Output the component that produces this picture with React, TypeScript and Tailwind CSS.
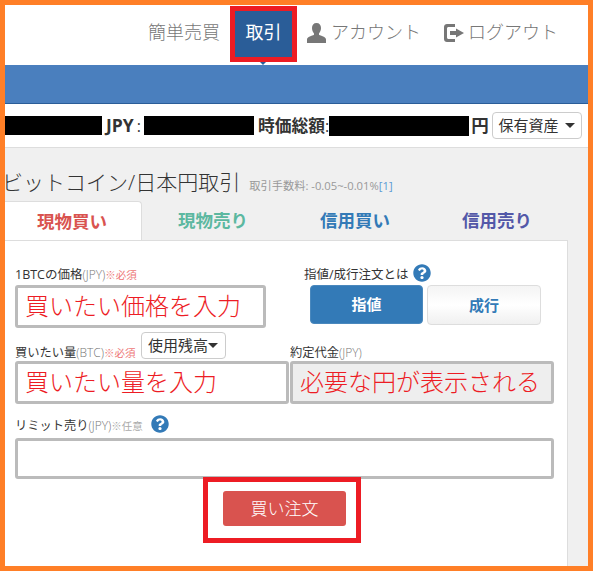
import { FaQuestionCircle } from "react-icons/fa";

const font = { fontFamily: '"Open Sans","Noto Sans CJK JP",sans-serif' };

function UserIcon() {
  return (
    <svg width="19" height="20" viewBox="0 0 19 20" className="text-[#777]" fill="currentColor">
      <path d="M9.5 0C6.6 0 5 2 5 5c0 2.2.8 4.2 2 5.4v1.4c-1.8 1-7 2-7 4.700V20h19v-3.500c0-2.700-5.200-3.700-7-4.700v-1.400c1.200-1.200 2-3.200 2-5.400 0-3-1.600-5-4.500-5z" />
    </svg>
  );
}

function LogoutIcon() {
  return (
    <svg width="20" height="18" viewBox="0 0 20 18" className="text-[#777]" fill="currentColor">
      <path d="M3 0h8v3H4.500C3.700 3 3 3.700 3 4.500v9c0 .8.7 1.500 1.500 1.500H11v3H3c-1.700 0-3-1.300-3-3V3c0-1.700 1.300-3 3-3z" />
      <path d="M12 4.500 20 9l-8 4.500V11H6V7h6z" />
    </svg>
  );
}

function Help() {
  return <FaQuestionCircle className="text-[#337ab7] text-[18px] shrink-0 mt-[-5px]" />;
}

function Field({ w, text, gray, h = "h-[43px]" }: { w: string; text?: string; gray?: boolean; h?: string }) {
  return (
    <div
      className={`${w} ${h} border-[3px] border-[#bbbbbb] rounded-[3px] flex items-center pl-[7px] pb-[2px] text-[24px] font-light text-[#ed1c24] whitespace-nowrap ${
        gray ? "bg-[#eeeeee]" : "bg-white"
      }`}
    >
      {text}
    </div>
  );
}

export default function App() {
  return (
    <div
      style={font}
      className="w-[593px] h-[571px] box-border border-[5px] border-[#ff7f27] overflow-hidden bg-[#f0f0f0] flex flex-col"
    >
      <header className="h-[60px] shrink-0 bg-white flex items-center justify-end pr-[30px] pb-[5px] text-[18px] font-light text-[#777]">
        <span>簡単売買</span>
        <div className="relative ml-[10px] mr-[10px] mt-[3px] w-[67px] h-[56px] border-[5px] border-[#ed1c24] bg-[#2a5d98] text-white font-normal flex items-center justify-center pb-[4px]">
          取引
          <span className="absolute left-[25px] top-[51px] border-x-[3px] border-t-[3px] border-x-transparent border-t-[#2a5d98]" />
        </div>
        <UserIcon />
        <span className="ml-[5px] mr-[23px]">アカウント</span>
        <LogoutIcon />
        <span className="ml-[4px]">ログアウト</span>
      </header>

      <div className="h-[39px] shrink-0 bg-[#4a7fbe] border-b border-[#2a5d98]" />

      <div className="h-[44px] shrink-0 bg-white border-b border-[#dddddd] flex items-center text-[17.500px] font-bold text-[#333] whitespace-nowrap">
        <span className="w-[97px] h-[19px] bg-black" />
        <span className="ml-[4px]">JPY</span>
        <span className="ml-[3px] font-normal text-[16px]">:</span>
        <span className="ml-[3px] w-[110px] h-[19px] bg-black" />
        <span className="ml-[4px] text-[16.750px]">時価総額</span>
        <span className="font-normal text-[16px]">:</span>
        <span className="w-[140px] h-[20px] bg-black" />
        <span className="ml-[2px]">円</span>
        <button className="ml-[3px] w-[90px] h-[27px] border border-[#cccccc] rounded bg-white text-[15px] font-normal flex items-center justify-center gap-[6px]">
          保有資産
          <span className="border-x-[5px] border-t-[5px] border-x-transparent border-t-[#333]" />
        </button>
      </div>

      <div className="flex items-baseline mt-[19px] ml-[-3px] whitespace-nowrap">
        <h1 className="text-[21px] leading-[30px] font-light text-[#333]">ビットコイン/日本円取引</h1>
        <span className="ml-[9px] text-[11.250px] text-[#999]">
          取引手数料: -0.05~-0.01%<span className="text-[#5b9bd5]">[1]</span>
        </span>
      </div>

      <div className="flex mt-[4px] ml-[-3px] h-[39px] text-[17.500px] font-bold">
        <div className="w-[140px] bg-white border border-b-0 border-[#dddddd] rounded-t flex items-center justify-center text-[#d9534f]">
          現物買い
        </div>
        <div className="w-[142px] flex items-center justify-center text-[#5cb8a0]">現物売り</div>
        <div className="w-[142px] flex items-center justify-center text-[#337ab7]">信用買い</div>
        <div className="w-[142px] flex items-center justify-center text-[#5358a8]">信用売り</div>
      </div>

      <main className="w-[563px] grow bg-white border-t border-r border-[#dddddd] pl-[10px] text-[#333]">
        <div className="flex mt-[24px]">
          <div className="w-[289px]">
            <p className="h-[20px] text-[12.500px] leading-[20px]">
              1BTCの価格<span className="text-[12px] font-light text-[#777]">(JPY)</span>
              <span className="text-[10.500px] text-[#e77]">※必須</span>
            </p>
            <Field w="w-[251px]" text="買いたい価格を入力" />
          </div>
          <div className="flex-1">
            <p className="h-[20px] text-[12.500px] leading-[20px] flex items-center gap-[4px]">
              指値/成行注文とは
              <Help />
            </p>
            <div className="flex ml-[6px] gap-[4px] font-bold text-[15px]">
              <div className="w-[113px] h-[39px] rounded border border-[#4a88bd] bg-[#337ab7] text-white flex items-center justify-center">
                指値
              </div>
              <div className="w-[114px] h-[40px] rounded border border-[#dddddd] bg-gradient-to-b from-[#f4f4f4] via-white to-[#f0f0f0] text-[#337ab7] flex items-center justify-center">
                成行
              </div>
            </div>
          </div>
        </div>

        <div className="flex mt-[4px]">
          <div className="w-[275px]">
            <div className="flex items-end h-[29px]">
              <p className="text-[12.250px] leading-[16px]">
                買いたい量<span className="text-[12px] font-light text-[#777]">(BTC)</span>
                <span className="text-[10.500px] text-[#e77]">※必須</span>
              </p>
              <button className="ml-[5px] mb-[2px] w-[85px] h-[27px] border border-[#cccccc] rounded bg-white text-[15px] flex items-center justify-center">
                使用残高
                <span className="border-x-[5px] border-t-[5px] border-x-transparent border-t-[#333]" />
              </button>
            </div>
            <Field w="w-[274px]" text="買いたい量を入力" />
          </div>
          <div>
            <div className="flex items-end h-[29px]">
              <p className="text-[12.250px] leading-[16px]">
                約定代金<span className="text-[12px] font-light text-[#777]">(JPY)</span>
              </p>
            </div>
            <Field w="w-[264px]" text="必要な円が表示される" gray />
          </div>
        </div>

        <div className="flex items-center gap-[8px] mt-[10px] h-[24px] text-[12.250px]">
          <p>
            リミット売り<span className="text-[12px] font-light text-[#777]">(JPY)</span>
            <span className="text-[10.500px] text-[#aaa]">※任意</span>
          </p>
          <Help />
        </div>
        <Field w="w-[539px]" h="h-[41px]" />

        <div className="w-[539px] flex justify-center pr-[5px] mt-[-2px]">
          <div className="w-[158px] h-[66px] border-[5px] border-[#ed1c24] flex items-center justify-center pl-[5px] pb-[3px]">
            <button className="w-[123px] h-[35px] rounded-[3px] bg-[#d9534f] text-white text-[17px] font-light">買い注文</button>
          </div>
        </div>
      </main>
    </div>
  );
}
